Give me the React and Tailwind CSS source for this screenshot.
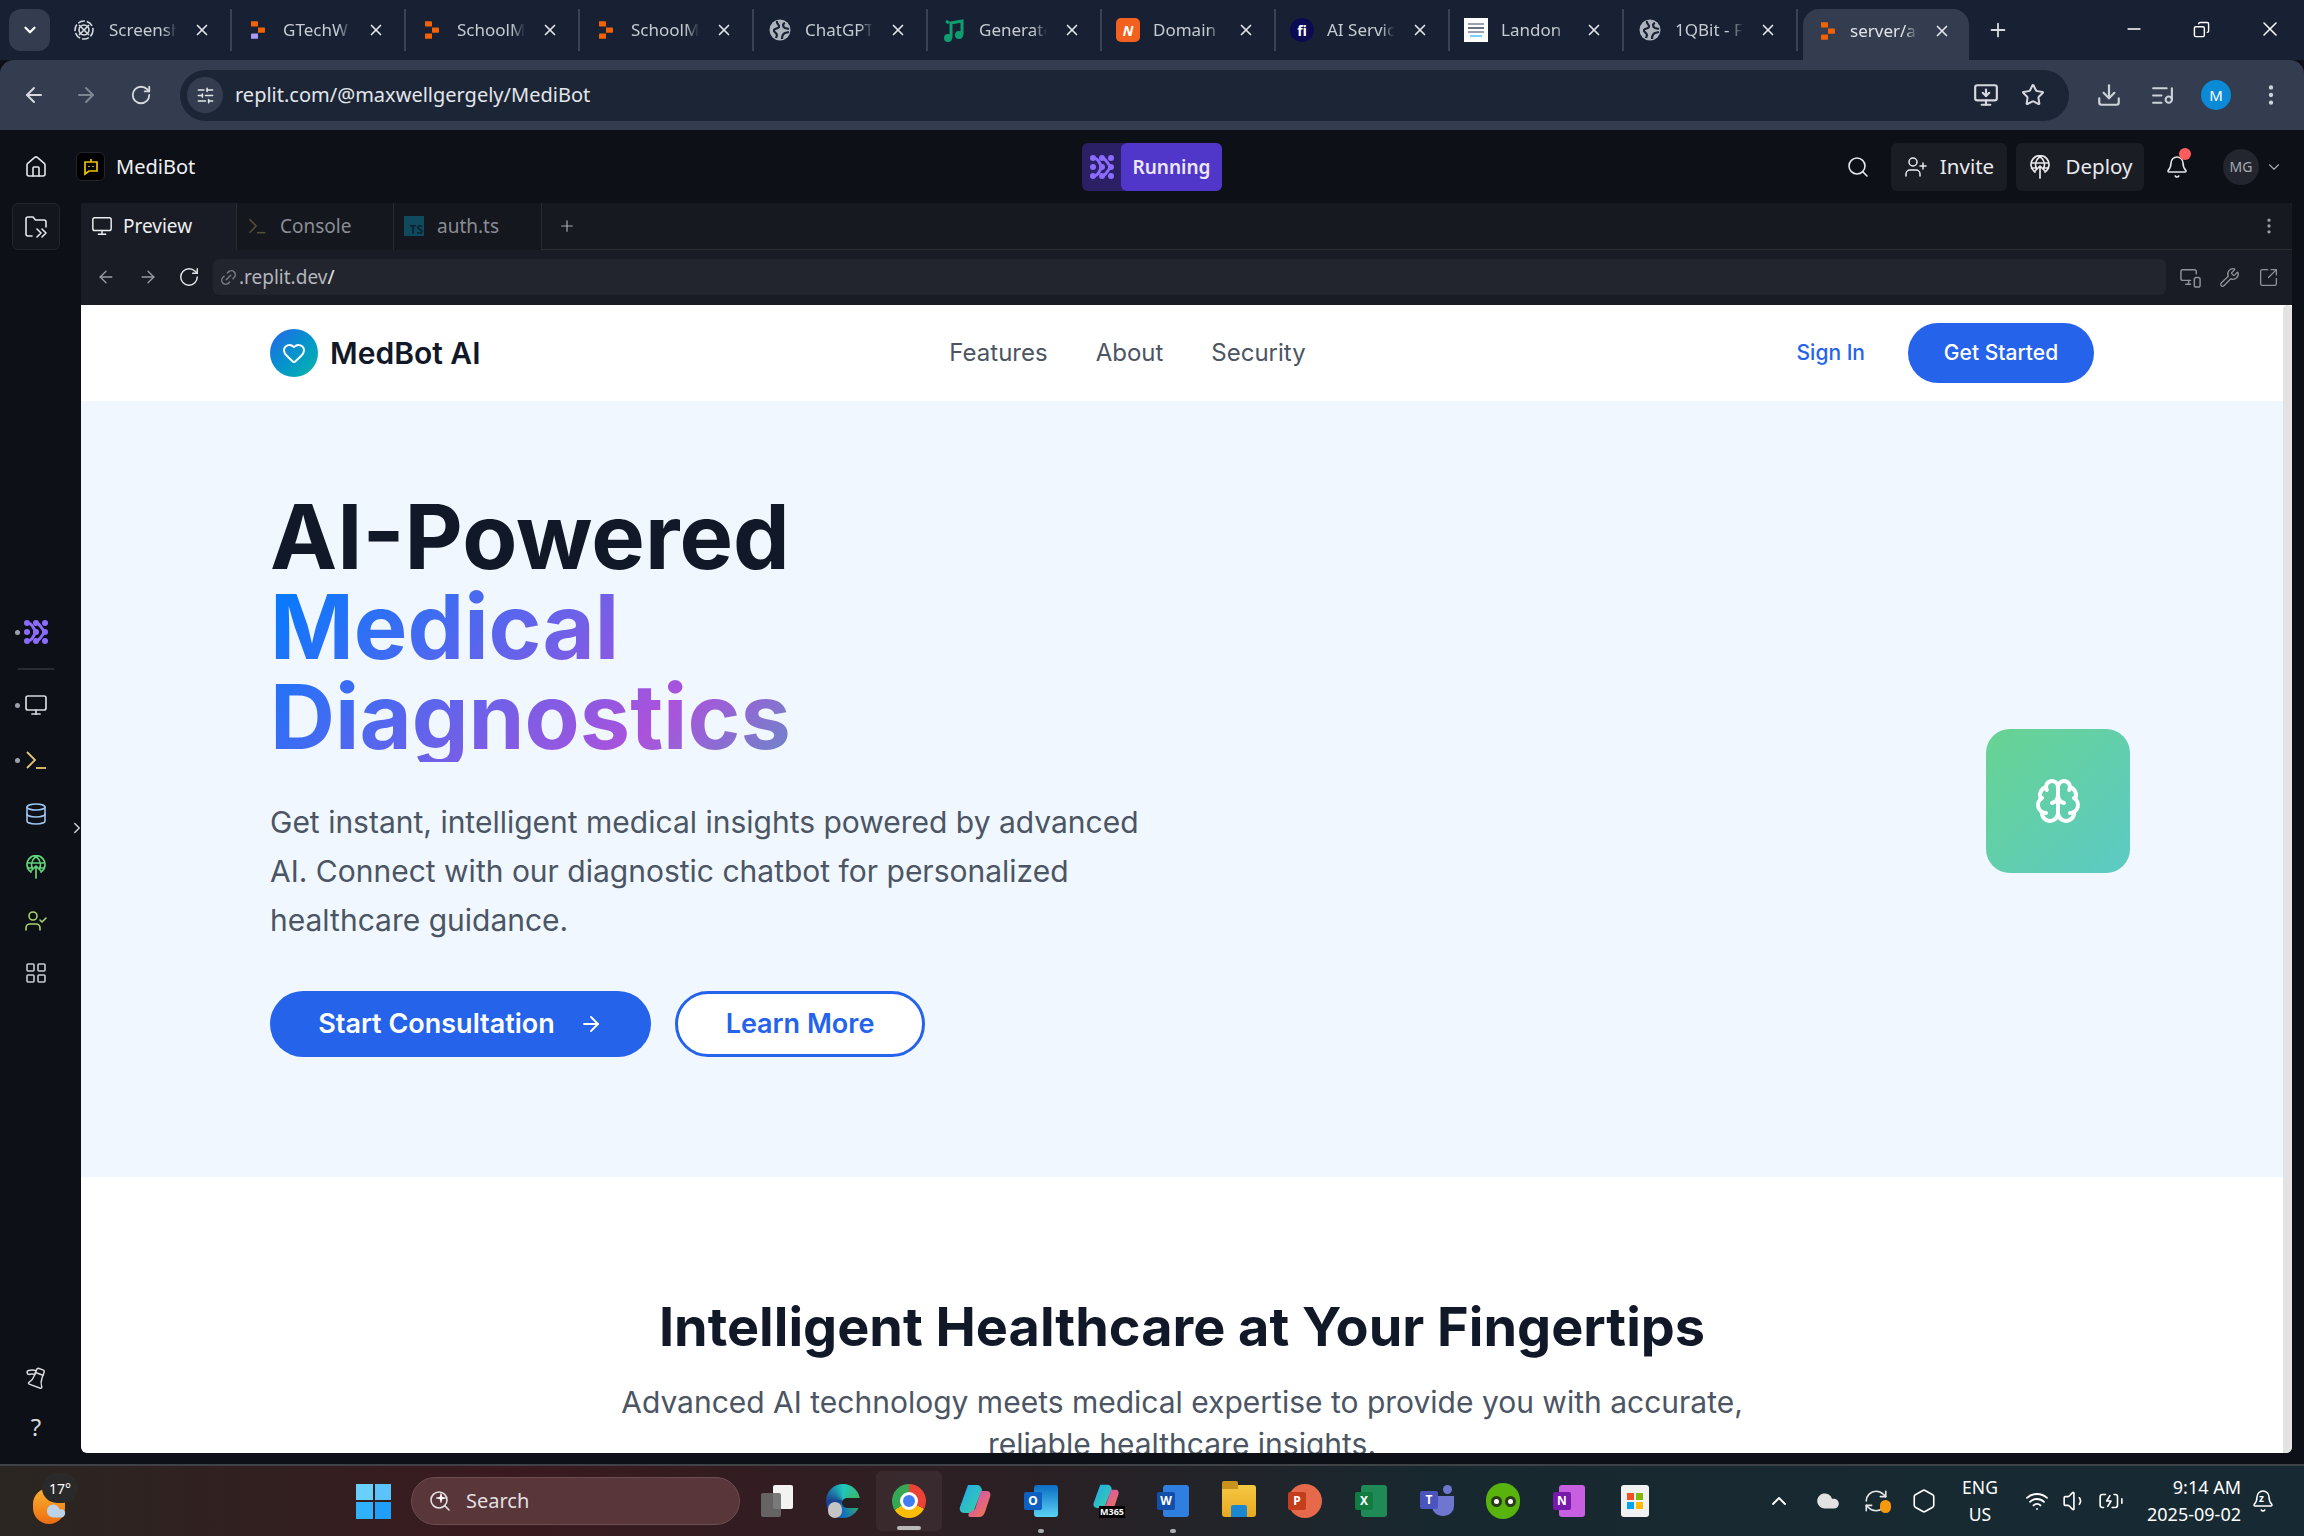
import {
  ArrowLeft, ArrowRight, Bell, Brain, ChevronDown, ChevronRight, ChevronUp, Database, Download,
  EllipsisVertical, Heart, House, Link2, ListMusic, Minus, Monitor, MonitorSmartphone, Plus, RotateCw, Search,
  SlidersHorizontal, Star, UserPlus, Wrench, X, LayoutGrid, MonitorDown, SquareArrowOutUpRight, Wifi, Volume1, BatteryCharging,
  Megaphone, UserCheck, Copy, RefreshCw, Hexagon, Cloud, Sparkle,
} from 'lucide-react'

const ReplitMark = ({ accent = '#f26207' }) => (
  <svg width="14" height="18" viewBox="0 0 16 20" fill="#f26207">
    <path d="M0 0h7a1 1 0 0 1 1 1v5H1a1 1 0 0 1-1-1z" />
    <path d="M8 7h7a1 1 0 0 1 1 1v4a1 1 0 0 1-1 1H8z" />
    <path d="M1 14h7v5a1 1 0 0 1-1 1H0v-5a1 1 0 0 1 1-1z" fill={accent} />
  </svg>
)

const GlobeFav = () => (
  <svg width="22" height="22" viewBox="0 0 22 22">
    <circle cx="11" cy="11" r="10.5" fill="#aeb4bd" />
    <path d="M8 2c-1 3 3 4 2 6s-4 1-5 3 3 3 3 5l-1 3M16 4c-3 1-2 4 0 5l4 1M13 20c0-3 1-5 3-6l4-1" stroke="#1a2335" strokeWidth="2.2" fill="none" />
  </svg>
)

const AgentMark = ({ size = 24 }) => (
  <svg width={size} height={size} viewBox="0 0 24 24" fill="#8b6cff" stroke="none">
    {[3, 12, 21].map((y) => [3, 12, 21].map((x) => <circle key={`${x}-${y}`} cx={x} cy={y} r="3" />))}
    <path d="M3 3c4 0 5 2 6 4l3 5-3 5c-1 2-2 4-6 4M12 3c4 0 4 4 9 9-5 5-5 9-9 9" fill="none" stroke="#8b6cff" strokeWidth="3" />
  </svg>
)

const DeployGlobe = ({ size = 24, color = 'currentColor' }) => (
  <svg width={size} height={size} viewBox="0 0 24 24" fill="none" stroke={color} strokeWidth="1.7" strokeLinecap="round" strokeLinejoin="round">
    <path d="M7 17A9 9 0 1 1 17 17M3.500 8h17M3.500 13h5M15.500 13h5M12 1.500c-5 4-5 9-3.500 12M12 1.500c5 4 5 9 3.500 12" />
    <path d="M12 23V11M7.500 15.500 12 11l4.500 4.500" />
  </svg>
)

const TerminalMark = ({ size = 24, a = '#e5c66f', b = '#e5c66f' }) => (
  <svg width={size} height={size} viewBox="0 0 24 24" fill="none" strokeWidth="1.8">
    <path d="m3 4 8 8-8 8" stroke={a} />
    <path d="M12 20h10" stroke={b} />
  </svg>
)

const FolderAgent = () => (
  <svg width="24" height="24" viewBox="0 0 24 24" fill="none" stroke="#e6e7ea" strokeWidth="1.600" strokeLinecap="round" strokeLinejoin="round">
    <path d="M8 21H4a2 2 0 0 1-2-2V4a2 2 0 0 1 2-2h5l2.500 3H20a2 2 0 0 1 2 2v5" />
    <path d="m13 14 4 4-4 4M18 14l4 4-4 4" />
  </svg>
)

const chromeTabs = [
  { title: 'Screensh', icon: <svg width="22" height="22" viewBox="0 0 22 22" fill="none" stroke="#d5d8dd" strokeWidth="1.600"><circle cx="11" cy="11" r="9" strokeDasharray="7 2" /><circle cx="11" cy="11" r="5" /><path d="M6 6l10 10M16 6 6 16" /></svg> },
  { title: 'GTechW', icon: <ReplitMark accent="#a79bf5" /> },
  { title: 'SchoolM', icon: <ReplitMark /> },
  { title: 'SchoolM', icon: <ReplitMark /> },
  { title: 'ChatGPT', icon: <GlobeFav /> },
  { title: 'Generate', icon: <svg width="22" height="24" viewBox="0 0 22 24" fill="none" stroke="#0f9d72" strokeWidth="3"><path d="M8 20V5l11-2v14M3 3l3 2" /><circle cx="5" cy="20" r="2.500" fill="#0f9d72" /><circle cx="16" cy="17" r="2.500" fill="#0f9d72" /></svg> },
  { title: 'Domain', icon: <div className="w-6 h-6 rounded-[5px] bg-[#f2611e] flex items-center justify-center text-white text-[14px] font-bold italic">N</div> },
  { title: 'AI Servic', icon: <div className="w-6 h-6 rounded-full bg-[#0b0a52] flex items-center justify-center text-white text-[14px] font-bold">fi</div> },
  { title: 'Landon', icon: <div className="w-6 h-6 bg-white flex flex-col items-center justify-center gap-[2px]"><div className="w-4 h-[2px] bg-gray-400" /><div className="w-4 h-[2px] bg-gray-500" /><div className="w-4 h-[2px] bg-gray-400" /><div className="w-3 h-[2px] bg-sky-300" /></div> },
  { title: '1QBit - F', icon: <GlobeFav /> },
]

const ChromeTab = ({ title, icon }) => (
  <div className="w-[174px] h-[42px] flex items-center shrink-0 border-r-2 border-[#3a4354] pl-[13px] pr-[19px]">
    <div className="w-[26px] flex justify-center shrink-0">{icon}</div>
    <span className="w-[68px] ml-[12px] overflow-hidden whitespace-nowrap text-[17px] text-[#c6cad1] [mask-image:linear-gradient(90deg,#000_80%,transparent)]">{title}</span>
    <X size={18} strokeWidth={2.200} className="text-[#e3e5e9] ml-auto shrink-0" />
  </div>
)

const ChromeBar = () => (
  <>
    <div className="h-[60px] bg-[#182133] flex items-start pl-[9px] pt-[9px] shrink-0 font-['Noto_Sans',sans-serif]">
      <div className="w-[41px] h-[42px] bg-[#333d4f] rounded-[12px] flex items-center justify-center shrink-0">
        <ChevronDown size={18} strokeWidth={3} className="text-white" />
      </div>
      <div className="flex ml-[8px]">
        {chromeTabs.map((t, i) => <ChromeTab key={i} {...t} />)}
      </div>
      <div className="w-[166px] h-[51px] ml-[5px] bg-[#333d4f] rounded-t-[16px] flex items-center pl-[15px] pr-[18px] pb-[8px] shrink-0">
        <div className="w-[20px] flex justify-center"><ReplitMark /></div>
        <span className="w-[68px] ml-[12px] overflow-hidden whitespace-nowrap text-[17px] text-[#e1e3e7] [mask-image:linear-gradient(90deg,#000_80%,transparent)]">server/au</span>
        <X size={18} strokeWidth={2.200} className="text-[#e3e5e9] ml-auto" />
      </div>
      <Plus size={22} strokeWidth={2} className="text-[#d7dae0] ml-[18px] mt-[10px]" />
      <div className="flex items-center mt-[8px] ml-auto">
        <Minus size={20} className="text-white mr-[49px]" />
        <Copy size={17} className="text-white mr-[48px] scale-x-[-1]" />
        <X size={24} strokeWidth={1.500} className="text-white mr-[22px]" />
      </div>
    </div>
    <div className="h-[70px] bg-[#333d4f] rounded-t-[14px] flex items-center pl-[22px] pr-[13px] shrink-0 font-['Noto_Sans',sans-serif]">
      <ArrowLeft size={24} className="text-[#d5d8de]" />
      <ArrowRight size={24} className="text-[#7e8592] ml-[28px]" />
      <RotateCw size={22} className="text-[#d5d8de] ml-[32px]" />
      <div className="w-[1889px] h-[51px] ml-[28px] bg-[#1c2536] rounded-full flex items-center pl-[7px] pr-[24px]">
        <div className="w-[36px] h-[36px] rounded-full bg-[#333d4f] flex items-center justify-center">
          <SlidersHorizontal size={19} className="text-[#e4e6ea]" />
        </div>
        <span className="ml-[12px] text-[20px] text-[#e3e6ea]">replit.com/@maxwellgergely/MediBot</span>
        <MonitorDown size={26} className="text-[#d5d8de] ml-auto" />
        <Star size={24} className="text-[#d5d8de] ml-[22px]" />
      </div>
      <Download size={26} className="text-[#cdd2da] ml-[27px]" />
      <ListMusic size={25} className="text-[#cdd2da] ml-[28px]" />
      <div className="w-[30px] h-[30px] rounded-full bg-[#0b8ad8] text-white text-[15px] flex items-center justify-center ml-[26px]">M</div>
      <EllipsisVertical size={26} className="text-[#cdd2da] ml-[27px]" />
    </div>
  </>
)

const ReplitHeader = () => (
  <div className="h-[73px] flex items-center relative shrink-0 font-['Noto_Sans',sans-serif]">
    <div className="w-[76px] flex justify-center pr-[4px]"><House size={24} strokeWidth={1.600} className="text-[#e4e5e8]" /></div>
    <div className="w-[29px] h-[29px] rounded-[6px] bg-black border border-[#23252c] flex items-center justify-center">
      <svg width="18" height="18" viewBox="0 0 18 18" fill="none" stroke="#eec400" strokeWidth="1.700"><path d="M9 1v3M3 4h12v9H7l-4 3z" /><path d="M7 8v1M11 8v1" /></svg>
    </div>
    <span className="ml-[11px] text-[20px] text-[#eff0f2]">MediBot</span>
    <div className="absolute left-[1082px] top-[13px] w-[140px] h-[48px] rounded-[6px] bg-[#2b1f66] flex">
      <div className="w-[39px] flex items-center justify-center"><AgentMark /></div>
      <div className="flex-1 rounded-[6px] bg-[#5137c9] flex items-center justify-center text-[19px] font-semibold text-[#ece8fb]">Running</div>
    </div>
    <div className="ml-auto flex items-center pr-[21px]">
      <Search size={24} strokeWidth={1.600} className="text-[#e4e5e8]" />
      <div className="ml-[21px] w-[116px] h-[48px] rounded-[6px] bg-[#1b1d25] flex items-center justify-center gap-[12px] text-[#e9eaed] text-[20.500px]">
        <UserPlus size={24} strokeWidth={1.500} /><span>Invite</span>
      </div>
      <div className="ml-[9px] w-[128px] h-[48px] rounded-[6px] bg-[#1b1d25] flex items-center justify-center gap-[14px] text-[#e9eaed] text-[20.500px]">
        <DeployGlobe /><span>Deploy</span>
      </div>
      <div className="ml-[21px] relative">
        <Bell size={24} strokeWidth={1.600} className="text-[#e4e5e8]" />
        <div className="absolute w-[12px] h-[12px] rounded-full bg-[#ff5d5d] top-[-7px] right-[-2px]" />
      </div>
      <div className="ml-[34px] w-[36px] h-[36px] rounded-full bg-[#23252f] text-[#a9abb2] text-[14px] flex items-center justify-center">MG</div>
      <ChevronDown size={18} strokeWidth={1.500} className="text-[#a9abb2] ml-[6px]" />
    </div>
  </div>
)

const RailIcon = ({ dot, className = '', children }) => (
  <div className={`relative flex justify-center ${className}`}>
    {dot && <div className="absolute left-[15px] top-[10px] w-[5px] h-[5px] rounded-full bg-[#9ca1a9]" />}
    {children}
  </div>
)

const LeftRail = () => (
  <div className="w-[81px] relative flex flex-col shrink-0">
    <div className="mx-[12px] w-[48px] h-[47px] rounded-[6px] bg-[#14161e] border border-[#23252d] flex items-center justify-center"><FolderAgent /></div>
    <RailIcon dot className="mt-[370px] w-[72px]"><AgentMark /></RailIcon>
    <div className="w-[36px] h-[2px] bg-[#2a2c34] ml-[18px] mt-[24px]" />
    <RailIcon dot className="mt-[23px] w-[72px]"><Monitor size={24} strokeWidth={1.700} className="text-[#d7d8dc]" /></RailIcon>
    <RailIcon dot className="mt-[31px] w-[72px]"><TerminalMark /></RailIcon>
    <RailIcon className="mt-[30px] w-[72px]"><Database size={24} strokeWidth={1.600} className="text-[#9cc4f0]" /></RailIcon>
    <RailIcon className="mt-[29px] w-[72px]"><DeployGlobe color="#5fd67a" /></RailIcon>
    <RailIcon className="mt-[30px] w-[72px]"><UserCheck size={24} strokeWidth={1.600} className="text-[#a9d36b]" /></RailIcon>
    <RailIcon className="mt-[28px] w-[72px]"><LayoutGrid size={24} strokeWidth={1.600} className="text-[#c8cacf]" /></RailIcon>
    <ChevronRight size={18} strokeWidth={1.800} className="absolute left-[68px] top-[616px] text-[#d7d8dc]" />
    <RailIcon className="mt-auto w-[72px]"><Megaphone size={24} strokeWidth={1.500} className="text-[#d7d8dc] rotate-[110deg]" /></RailIcon>
    <div className="w-[72px] text-center text-[24px] text-[#d7d8dc] mt-[21px] mb-[20px] leading-[34px]">?</div>
  </div>
)

const PreviewTab = ({ active, width, icon, label, gap = 'ml-[10px]' }) => (
  <div className={`h-[47px] flex items-center pl-[10px] border-r border-[#2a2c34] ${width} ${active ? 'bg-[#1a1c25] text-[#eceef0]' : 'bg-[#15171e] text-[#8a8d95]'}`}>
    {icon}
    <span className={`${gap} text-[19px]`}>{label}</span>
  </div>
)

const WorkspaceBars = () => (
  <div className="font-['Noto_Sans',sans-serif] shrink-0 mr-[12px] bg-[#1a1c25]">
    <div className="h-[47px] flex items-center bg-[#171921] rounded-t-[6px] border-b border-[#2a2c34]">
      <PreviewTab active width="w-[156px]" label="Preview" icon={<Monitor size={22} strokeWidth={1.600} />} />
      <PreviewTab width="w-[157px]" label="Console" gap="ml-[13px]" icon={<TerminalMark size={20} a="#55503a" b="#55503a" />} />
      <PreviewTab width="w-[148px]" label="auth.ts" gap="ml-[13px]" icon={<div className="w-[20px] h-[20px] bg-[#0f4a5e] text-[#0a2430] text-[12px] font-bold flex items-end justify-end pr-[1px] leading-none">TS</div>} />
      <Plus size={18} strokeWidth={1.600} className="text-[#a8aab0] ml-[16px]" />
      <EllipsisVertical size={20} className="text-[#9a9ca3] ml-auto mr-[13px]" />
    </div>
    <div className="h-[55px] flex items-center pl-[15px] pr-[11px] pb-[1px]">
      <ArrowLeft size={20} strokeWidth={1.600} className="text-[#9a9ca3]" />
      <ArrowRight size={20} strokeWidth={1.600} className="text-[#9a9ca3] ml-[22px]" />
      <RotateCw size={22} strokeWidth={1.600} className="text-[#e4e5e8] ml-[20px]" />
      <div className="w-[1953px] h-[36px] ml-[13px] rounded-[6px] bg-[#23252e] flex items-center pl-[6px] text-[19px] text-[#b4b6bb]">
        <Link2 size={19} className="text-[#74767d] -rotate-45" />
        <span className="ml-[1px]">.replit.dev<span className="text-[#e4e5e8]">/</span></span>
      </div>
      <MonitorSmartphone size={23} strokeWidth={1.500} className="text-[#8f9198] ml-[13px]" />
      <Wrench size={21} strokeWidth={1.500} className="text-[#8f9198] ml-[17px]" />
      <SquareArrowOutUpRight size={21} strokeWidth={1.500} className="text-[#8f9198] ml-[18px]" />
    </div>
  </div>
)

const SitePage = () => (
  <div className="mr-[12px] h-[1148px] flex rounded-b-[6px] overflow-hidden bg-white font-['Inter',sans-serif]">
    <div className="w-[2202px] shrink-0">
      <nav className="h-[96px] bg-white flex justify-center">
        <div className="w-[1824px] flex items-center justify-between">
          <div className="flex items-center gap-[12px]">
            <div className="w-[48px] h-[48px] rounded-full bg-gradient-to-br from-[#2563eb] to-[#14b8a6] flex items-center justify-center">
              <Heart size={24} strokeWidth={2} className="text-white" />
            </div>
            <span className="text-[30px] font-semibold text-[#111827]">MedBot AI</span>
          </div>
          <div className="flex items-center gap-[48px] text-[24px] text-[#4b5563] mr-[22px]">
            <span>Features</span><span>About</span><span>Security</span>
          </div>
          <div className="flex items-center gap-[43px]">
            <span className="text-[21px] font-medium text-[#2563eb]">Sign In</span>
            <div className="w-[186px] h-[60px] rounded-full bg-[#2563eb] text-white text-[21px] font-medium flex items-center justify-center">Get Started</div>
          </div>
        </div>
      </nav>

      <section className="relative h-[776px] bg-[#f0f7ff] flex justify-center pt-[91px]">
        <div className="w-[1824px]">
          <h1 className="text-[90px] leading-none font-bold text-[#111827]">
            AI-Powered
            <span className="block w-fit bg-[linear-gradient(135deg,#007bff_0%,#ab52dc_75%,#6c87c8_100%)] bg-clip-text text-transparent">Medical<br />Diagnostics</span>
          </h1>
          <p className="mt-[36px] w-[900px] text-[30px] leading-[48.750px] text-[#4b5563]">
            Get instant, intelligent medical insights powered by advanced AI. Connect with our diagnostic chatbot for personalized healthcare guidance.
          </p>
          <div className="mt-[47px] flex gap-[24px]">
            <div className="w-[381px] h-[66px] rounded-full bg-[#2563eb] text-white text-[27px] font-semibold flex items-center justify-center gap-[24px]">
              Start Consultation <ArrowRight size={24} strokeWidth={1.800} />
            </div>
            <div className="w-[250px] h-[66px] rounded-full bg-white border-[3px] border-[#2563eb] text-[#2563eb] text-[27px] font-semibold flex items-center justify-center">
              Learn More
            </div>
          </div>
        </div>
        <div className="absolute right-[153px] top-[328px] w-[144px] h-[144px] rounded-[24px] bg-gradient-to-br from-[#68d391] to-[#5ccac4] flex items-center justify-center">
          <Brain size={48} strokeWidth={2} className="text-white" />
        </div>
      </section>

      <section className="pt-[120px] flex flex-col items-center">
        <h2 className="text-[54px] leading-[60px] font-bold text-[#111827]">Intelligent Healthcare at Your Fingertips</h2>
        <p className="mt-[24px] w-[1152px] text-center text-[30px] leading-[42px] text-[#4b5563]">
          Advanced AI technology meets medical expertise to provide you with accurate, reliable healthcare insights.
        </p>
      </section>
    </div>
    <div className="w-[9px] h-full bg-[#e3e3e3] rounded-t-[5px]" />
  </div>
)

const Win = () => (
  <div className="grid grid-cols-2 gap-[2px] w-[35px] h-[35px]">
    <div className="bg-[#69cffb]" /><div className="bg-[#5ac4fa]" /><div className="bg-[#2fb1fb]" /><div className="bg-[#1d9ffa]" />
  </div>
)

const Sq = ({ bg2, letter, letterBg }) => (
  <div className="relative w-[32px] h-[32px]">
    <div className="absolute left-[6px] top-0 w-[26px] h-[32px] rounded-[3px]" style={{ background: bg2 }} />
    <div className="absolute left-0 top-[7px] w-[18px] h-[18px] rounded-[2px] text-white text-[12px] font-bold flex items-center justify-center" style={{ background: letterBg }}>{letter}</div>
  </div>
)

const Ribbon = ({ h = 34 }) => (
  <svg width="32" height={h} viewBox="0 0 32 34">
    <defs>
      <linearGradient id="rb1" x1="0" y1="0" x2="1" y2="1"><stop offset="0" stopColor="#22a6f2" /><stop offset="1" stopColor="#38d39f" /></linearGradient>
      <linearGradient id="rb2" x1="0" y1="0" x2="1" y2="1"><stop offset="0" stopColor="#c74fd8" /><stop offset="1" stopColor="#f5783a" /></linearGradient>
    </defs>
    <path d="M9 1h9c3 0 4 2 5 5l-8 20c-1 2-3 3-5 3H5c-3 0-5-3-4-6z" fill="url(#rb1)" />
    <path d="M22 7h6c3 0 4 3 3 6l-5 15c-1 3-3 5-6 5h-8c-3 0-3-2-2-4l6-4z" fill="url(#rb2)" />
  </svg>
)

const taskIcons = [
  <div key="tv" className="relative w-[32px] h-[32px]"><div className="absolute right-0 top-0 w-[20px] h-[24px] bg-[#f3f3f3] rounded-[2px]" /><div className="absolute left-0 bottom-0 w-[20px] h-[24px] bg-[#6b6b6b]/90 rounded-[2px]" /></div>,
  <div key="edge" className="relative w-[34px] h-[34px] rounded-full bg-[conic-gradient(#1fc7c0,#3db65f,#0f6fc0,#1b3f90,#1fc7c0)]"><div className="absolute right-0 top-[14px] w-[18px] h-[10px] bg-[#241f22] rounded-l-full" /><div className="absolute left-[2px] bottom-0 w-[14px] h-[16px] rounded-full bg-[#c4c4c4]" /></div>,
  <div key="ch" className="relative w-[34px] h-[34px] rounded-full bg-[conic-gradient(#ea4335_0_33%,#fbbc05_33%_66%,#34a853_66%_100%)] flex items-center justify-center"><div className="w-[18px] h-[18px] rounded-full bg-[#3f7ef0] border-[3px] border-white" /></div>,
  <Ribbon key="cp" />,
  <div key="ol" className="relative w-[34px] h-[32px]"><div className="absolute right-0 top-0 w-[24px] h-[32px] rounded-[3px] bg-gradient-to-b from-[#0a6cc4] to-[#5bd3f5]" /><div className="absolute left-0 top-[7px] w-[18px] h-[18px] rounded-[2px] bg-[#0f5fc0] text-white text-[12px] font-bold flex items-center justify-center">O</div></div>,
  <div key="m365" className="relative w-[34px] h-[34px]"><Ribbon h={28} /><div className="absolute left-[9px] bottom-0 bg-black text-white text-[9px] leading-[12px] px-[1px] font-bold">M365</div></div>,
  <Sq key="w" bg2="#2f7fe0" letter="W" letterBg="#134ea8" />,
  <div key="ex" className="relative w-[34px] h-[32px] rounded-[3px] bg-gradient-to-b from-[#f5c842] to-[#e9a820]"><div className="absolute left-0 -top-[4px] w-[16px] h-[8px] bg-[#c9921a] rounded-t-[2px]" /><div className="absolute left-[9px] bottom-0 w-[16px] h-[12px] bg-[#1b87d0] rounded-t-[2px]" /></div>,
  <div key="p" className="relative w-[34px] h-[34px] rounded-full bg-[#e5694a]"><div className="absolute left-0 top-[8px] w-[18px] h-[18px] rounded-[2px] bg-[#c43e1c] text-white text-[12px] font-bold flex items-center justify-center">P</div></div>,
  <Sq key="x" bg2="#1f8a55" letter="X" letterBg="#107c41" />,
  <div key="t" className="relative w-[34px] h-[32px]"><div className="absolute right-[2px] top-0 w-[9px] h-[9px] rounded-full bg-[#6f76d0]" /><div className="absolute right-0 top-[11px] w-[22px] h-[20px] rounded-b-[10px] bg-[#6f76d0]" /><div className="absolute left-0 top-[6px] w-[18px] h-[18px] rounded-[2px] bg-[#4b53bc] text-white text-[12px] font-bold flex items-center justify-center">T</div></div>,
  <div key="d" className="w-[34px] h-[36px] rounded-full bg-[#58b30c] flex items-center justify-center gap-[3px]"><div className="w-[11px] h-[11px] rounded-full bg-white border-[3px] border-[#2b3a1a]" /><div className="w-[11px] h-[11px] rounded-full bg-white border-[3px] border-[#2b3a1a]" /></div>,
  <Sq key="n" bg2="#c85fe0" letter="N" letterBg="#7719aa" />,
  <div key="s" className="w-[28px] h-[32px] rounded-[3px] bg-[#f1f1f1] grid grid-cols-2 gap-[2px] px-[6px] py-[8px]"><div className="bg-[#f25022]" /><div className="bg-[#7fba00]" /><div className="bg-[#00a4ef]" /><div className="bg-[#ffb900]" /></div>,
]

const Taskbar = () => (
  <div className="h-[72px] shrink-0 border-t-2 border-[#3e4246] flex items-center relative bg-[linear-gradient(90deg,#2a2622_0%,#3a1a1f_22%,#2a2024_45%,#18282f_62%,#172a33_100%)] font-['Noto_Sans',sans-serif] text-white">
    <div className="absolute left-[33px] top-[22px] w-[32px] h-[36px] rounded-full bg-gradient-to-b from-[#f8b22e] to-[#ec6c12]" />
    <div className="absolute left-[42px] top-[7px] h-[30px] w-[36px] rounded-full bg-[#2a2a2a] text-[14px] flex items-center justify-center">17°</div>
    <Cloud size={22} fill="#bcd3ea" strokeWidth={0} className="absolute left-[45px] top-[34px]" />
    <div className="ml-[356px]"><Win /></div>
    <div className="ml-[20px] w-[329px] h-[48px] rounded-full bg-[#58363a] border border-[#6b4e51] flex items-center pl-[16px] text-[20px] text-[#e5dfe0]">
      <div className="relative">
        <Search size={24} strokeWidth={1.600} />
        <Sparkle size={12} fill="white" strokeWidth={0} className="absolute top-[3px] left-[7px]" />
      </div>
      <span className="ml-[14px]">Search</span>
    </div>
    <div className="flex ml-[4px] w-[924px]">
      {taskIcons.map((icon, i) => (
        <div key={i} className={`relative w-[66px] h-[60px] flex items-center justify-center rounded-[6px] ${i === 2 ? 'bg-white/5' : ''}`}>
          {icon}
          {i === 2 && <div className="absolute bottom-[1px] w-[24px] h-[4px] rounded-full bg-[#b9b9b9]" />}
          {(i === 4 || i === 6) && <div className="absolute bottom-[-2px] w-[6px] h-[4px] rounded-full bg-[#a8adb0]" />}
        </div>
      ))}
    </div>
    <ChevronUp size={24} strokeWidth={1.800} className="ml-[99px]" />
    <Cloud size={26} fill="#e2e2e2" strokeWidth={0} className="ml-[24px]" />
    <div className="relative ml-[22px]">
      <RefreshCw size={26} strokeWidth={1.500} className="text-[#e8e8e8]" />
      <div className="absolute right-[-2px] bottom-[1px] w-[11px] h-[13px] rounded-full bg-[#f59a0c]" />
    </div>
    <Hexagon size={26} strokeWidth={1.500} className="ml-[22px]" />
    <div className="ml-[25px] w-[36px] text-center text-[17.500px] leading-[27px]">ENG<br />US</div>
    <Wifi size={24} strokeWidth={1.800} className="ml-[27px]" />
    <Volume1 size={26} strokeWidth={1.500} className="ml-[13px]" />
    <BatteryCharging size={26} strokeWidth={1.500} className="ml-[10px]" />
    <div className="ml-[22px] w-[95px] text-right text-[18px] leading-[27px] whitespace-nowrap">9:14 AM<br />2025-09-02</div>
    <div className="relative ml-[10px]">
      <Bell size={24} strokeWidth={1.500} />
      <span className="absolute left-[8px] top-[3px] text-[10px] leading-[12px] font-bold">z</span>
    </div>
  </div>
)

const App = () => (
  <div className="w-[2304px] h-[1536px] flex flex-col overflow-hidden bg-[#0e1018]">
    <ChromeBar />
    <ReplitHeader />
    <div className="flex-1 flex min-h-0">
      <LeftRail />
      <div className="flex-1 min-w-0">
        <WorkspaceBars />
        <SitePage />
      </div>
    </div>
    <Taskbar />
  </div>
)

export default App
